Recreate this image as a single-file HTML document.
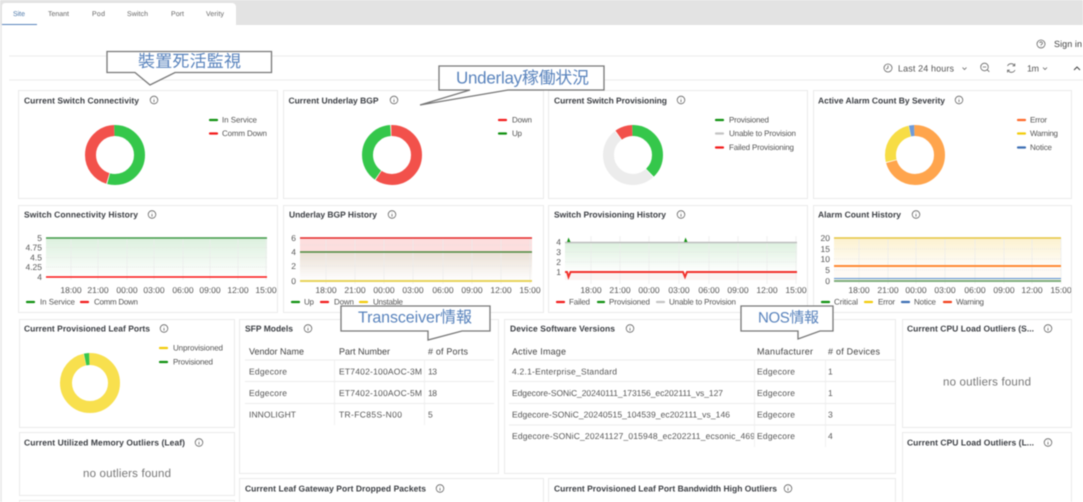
<!DOCTYPE html>
<html lang="zh-Hant"><head><meta charset="utf-8"><title>Dashboard</title>
<style>
html,body{margin:0;padding:0;width:1083px;height:502px;overflow:hidden;background:#fff}
svg{display:block;filter:blur(.4px)}
text{font-family:"Liberation Sans","Noto Sans CJK TC",sans-serif;font-size:8px;fill:#555;dominant-baseline:central;text-rendering:geometricPrecision}
.tab{font-size:7px;fill:#666}
.t{font-size:8.5px;font-weight:bold;fill:#3c3f44}
.c{fill:#fff;stroke:#ebebeb;stroke-width:1}
.th{font-size:9px;fill:#444}
.td{font-size:8.5px;fill:#555}
.ax{font-size:8.5px;fill:#555}
.no{font-size:11.5px;fill:#777}
.cj{font-size:17px;fill:#5a84bd}
.ic{fill:none;stroke:#666;stroke-width:.8}
.co{fill:#fff;stroke:#777;stroke-width:1.3}
.gv{stroke:#ebebeb;stroke-width:.7}
.gh{stroke:#ddd;stroke-width:.6;stroke-dasharray:1 1}
.rl{stroke:#ececec;stroke-width:1}
.l{stroke-width:2.2;stroke-linecap:round}
</style></head><body>
<svg width="1083" height="502" viewBox="0 0 1083 502" xmlns="http://www.w3.org/2000/svg">
<defs>
<linearGradient id="gg" x1="0" y1="0" x2="0" y2="1"><stop offset="0" stop-color="#dcf0de"/><stop offset="1" stop-color="#fff"/></linearGradient>
<linearGradient id="gb" x1="0" y1="0" x2="0" y2="1"><stop offset="0" stop-color="#eadfd4"/><stop offset="1" stop-color="#fff"/></linearGradient>
<linearGradient id="gy" x1="0" y1="0" x2="0" y2="1"><stop offset="0" stop-color="#fcf1cf"/><stop offset="1" stop-color="#fffdf8"/></linearGradient>
<clipPath id="cl1"><rect x="20" y="284" width="257" height="12"/></clipPath>
<clipPath id="cl2"><rect x="285" y="284" width="257" height="12"/></clipPath>
<clipPath id="cl3"><rect x="550" y="284" width="257" height="12"/></clipPath>
<clipPath id="cl4"><rect x="815" y="284" width="256" height="12"/></clipPath>
<clipPath id="cl5"><rect x="505" y="428" width="249" height="16"/></clipPath>
</defs>

<!-- top bar + tabs -->
<rect x="0" y="0" width="1083" height="25" fill="#e3e3e3"/>
<path d="M2 25V6a3 3 0 0 1 3-3H232a4 4 0 0 1 4 4V25z" fill="#fff"/>
<rect x="2" y="24" width="35" height="1" fill="#5a84bd"/>
<text x="13" y="14.500" class="tab" style="fill:#4a76a8" textLength="12">Site</text>
<text x="48" y="14.500" class="tab" textLength="21">Tenant</text>
<text x="92" y="14.500" class="tab" textLength="13">Pod</text>
<text x="127" y="14.500" class="tab" textLength="21">Switch</text>
<text x="171" y="14.500" class="tab" textLength="13">Port</text>
<text x="206" y="14.500" class="tab" textLength="18">Verity</text>
<rect x="0" y="25" width="2" height="477" fill="#ececec"/>
<line x1="9" y1="56" x2="1083" y2="56" class="rl"/>
<line x1="9" y1="80" x2="1083" y2="80" class="rl"/>

<!-- toolbar -->
<circle cx="1041" cy="44" r="4" class="ic"/><path d="M1039.800 43a1.300 1.300 0 1 1 1.800 1.300l-.6.500v.6M1041 46.300v.4" class="ic"/>
<text x="1054" y="44" style="font-size:9px;fill:#444" textLength="28">Sign in</text>
<circle cx="888" cy="68" r="4" class="ic"/><path d="M888 65.500V68l-1.800 1" class="ic"/>
<text x="898" y="68.500" style="font-size:9px" textLength="56">Last 24 hours</text>
<path d="M962.500 67.500l2 2 2-2" class="ic"/>
<circle cx="984.500" cy="67" r="3.800" class="ic"/><path d="M982.800 67h3.400M987.300 69.800l2 2" class="ic"/>
<path d="M1007.500 66a4 4 0 0 1 7-.5M1015 70a4 4 0 0 1-7 .5" class="ic"/><path d="M1014.800 63.500v2.300h-2.300M1007.500 72.500v-2.300h2.300" class="ic"/>
<text x="1027" y="68.500" style="font-size:9px" textLength="12">1m</text>
<path d="M1043 67.500l2 2 2-2" class="ic"/>
<path d="M1074 70l3-3 3 3" fill="none" stroke="#444" stroke-width="1"/>

<!-- row 1 cards -->
<rect x="18.500" y="90.500" width="259" height="108" class="c"/>
<rect x="283.500" y="90.500" width="260" height="108" class="c"/>
<rect x="548.500" y="90.500" width="259" height="108" class="c"/>
<rect x="813.500" y="90.500" width="258" height="108" class="c"/>
<text x="24" y="100.500" class="t" textLength="115">Current Switch Connectivity</text>
<text x="288.500" y="100.500" class="t" textLength="90">Current Underlay BGP</text>
<text x="554" y="100.500" class="t" textLength="113">Current Switch Provisioning</text>
<text x="818" y="100.500" class="t" textLength="127">Active Alarm Count By Severity</text>
<g class="ic"><circle cx="154" cy="100" r="3.800"/><path d="M154 98v.4M154 99.500v2.600"/>
<circle cx="394" cy="100" r="3.800"/><path d="M394 98v.4M394 99.500v2.600"/>
<circle cx="681" cy="100" r="3.800"/><path d="M681 98v.4M681 99.500v2.600"/>
<circle cx="959" cy="100" r="3.800"/><path d="M959 98v.4M959 99.500v2.600"/></g>

<!-- donuts -->
<g fill="none" stroke-width="11" transform="translate(115 155) rotate(-90)">
<circle r="24.500" pathLength="100" stroke="#35c74b" stroke-dasharray="54.500 45.500"/>
<circle r="24.500" pathLength="100" stroke="#f2514b" stroke-dasharray="45 55" stroke-dashoffset="-55"/></g>
<g fill="none" stroke-width="11" transform="translate(392 155) rotate(-90)">
<circle r="24.500" pathLength="100" stroke="#f2514b" stroke-dasharray="59.500 40.500"/>
<circle r="24.500" pathLength="100" stroke="#35c74b" stroke-dasharray="39.500 60.500" stroke-dashoffset="-60"/></g>
<g fill="none" stroke-width="11" transform="translate(633 155) rotate(-90)">
<circle r="24.500" pathLength="100" stroke="#35c74b" stroke-dasharray="38 62"/>
<circle r="24.500" pathLength="100" stroke="#ececec" stroke-dasharray="51.500 48.500" stroke-dashoffset="-38.500"/>
<circle r="24.500" pathLength="100" stroke="#f2514b" stroke-dasharray="9.500 90.500" stroke-dashoffset="-90.500"/></g>
<g fill="none" stroke-width="11" transform="translate(915 155) rotate(-90)">
<circle r="24.500" pathLength="100" stroke="#ffa54d" stroke-dasharray="71 29"/>
<circle r="24.500" pathLength="100" stroke="#f7dd45" stroke-dasharray="25.500 74.500" stroke-dashoffset="-71.500"/>
<circle r="24.500" pathLength="100" stroke="#6f9bd8" stroke-dasharray="2.800 97.200" stroke-dashoffset="-97.200"/></g>

<!-- donut legends -->
<line x1="210" y1="120" x2="217" y2="120" class="l" stroke="#119111"/><text x="222" y="120" textLength="35">In Service</text>
<line x1="210" y1="133.500" x2="217" y2="133.500" class="l" stroke="#f21c1c"/><text x="222" y="133.500" textLength="45">Comm Down</text>
<line x1="499" y1="120" x2="506" y2="120" class="l" stroke="#f21c1c"/><text x="512" y="120" textLength="20">Down</text>
<line x1="499" y1="133.500" x2="506" y2="133.500" class="l" stroke="#119111"/><text x="512" y="133.500" textLength="10">Up</text>
<line x1="716" y1="120" x2="723" y2="120" class="l" stroke="#119111"/><text x="729" y="120" textLength="40">Provisioned</text>
<line x1="716" y1="133.500" x2="723" y2="133.500" class="l" stroke="#c4c4c4"/><text x="729" y="133.500" textLength="67">Unable to Provision</text>
<line x1="716" y1="147.500" x2="723" y2="147.500" class="l" stroke="#f21c1c"/><text x="729" y="147.500" textLength="65">Failed Provisioning</text>
<line x1="1018" y1="120" x2="1025" y2="120" class="l" stroke="#ff6a2a"/><text x="1030" y="120" textLength="17">Error</text>
<line x1="1018" y1="133.500" x2="1025" y2="133.500" class="l" stroke="#f2cc0c"/><text x="1030" y="133.500" textLength="28">Warning</text>
<line x1="1018" y1="147.500" x2="1025" y2="147.500" class="l" stroke="#3d6fb4"/><text x="1030" y="147.500" textLength="22">Notice</text>
<!-- row 2 cards -->
<rect x="18.500" y="205.500" width="259" height="107" class="c"/>
<rect x="283.500" y="205.500" width="260" height="107" class="c"/>
<rect x="548.500" y="205.500" width="259" height="107" class="c"/>
<rect x="813.500" y="205.500" width="258" height="107" class="c"/>
<text x="24" y="214.500" class="t" textLength="114">Switch Connectivity History</text>
<text x="289" y="214.500" class="t" textLength="88">Underlay BGP History</text>
<text x="554" y="214.500" class="t" textLength="112">Switch Provisioning History</text>
<text x="818" y="214.500" class="t" textLength="83">Alarm Count History</text>
<g class="ic"><circle cx="152" cy="214.500" r="3.800"/><path d="M152 212.500v.4M152 214v2.600"/>
<circle cx="392" cy="214.500" r="3.800"/><path d="M392 212.500v.4M392 214v2.600"/>
<circle cx="681" cy="214.500" r="3.800"/><path d="M681 212.500v.4M681 214v2.600"/>
<circle cx="916" cy="214.500" r="3.800"/><path d="M916 212.500v.4M916 214v2.600"/></g>

<!-- chart 1 -->
<rect x="46" y="238" width="221" height="39" fill="url(#gg)"/>
<g class="gv"><path d="M71 238V280M98 238V280M127 238V280M154 238V280M183 238V280M210 238V280M238 238V280M266 238V280"/></g>
<g class="gh"><path d="M46 247.500H267M46 257.500H267M46 267H267"/></g>
<line x1="46" y1="238" x2="267" y2="238" stroke="#3f9a46" stroke-width="1.600"/>
<line x1="46" y1="277" x2="267" y2="277" stroke="#fa1414" stroke-width="1.600"/>
<text class="ax" x="42" y="238" text-anchor="end">5</text><text class="ax" x="42" y="247.500" text-anchor="end">4.75</text><text class="ax" x="42" y="257.500" text-anchor="end">4.5</text><text class="ax" x="42" y="267" text-anchor="end">4.25</text><text class="ax" x="42" y="277" text-anchor="end">4</text>
<g clip-path="url(#cl1)" text-anchor="middle"><text class="ax" x="71" y="290">18:00</text><text class="ax" x="98" y="290">21:00</text><text class="ax" x="127" y="290">00:00</text><text class="ax" x="154" y="290">03:00</text><text class="ax" x="183" y="290">06:00</text><text class="ax" x="210" y="290">09:00</text><text class="ax" x="238" y="290">12:00</text><text class="ax" x="266" y="290">15:00</text></g>
<line x1="27" y1="302" x2="34" y2="302" class="l" stroke="#119111"/><text x="40" y="302" textLength="35">In Service</text>
<line x1="81" y1="302" x2="88" y2="302" class="l" stroke="#f21c1c"/><text x="94" y="302" textLength="44">Comm Down</text>

<!-- chart 2 -->
<rect x="300" y="238" width="232" height="14" fill="#fddede"/>
<rect x="300" y="252" width="232" height="29" fill="url(#gb)"/>
<g class="gv"><path d="M326 238V284M355 238V284M384 238V284M413 238V284M443 238V284M472 238V284M501 238V284M530 238V284"/></g>
<g class="gh"><path d="M300 245H532M300 259H532M300 266H532"/></g>
<line x1="300" y1="238" x2="532" y2="238" stroke="#e32727" stroke-width="1.600"/>
<line x1="300" y1="252" x2="532" y2="252" stroke="#4c8a3e" stroke-width="1.400"/>
<line x1="300" y1="281" x2="532" y2="281" stroke="#e8d35a" stroke-width="2"/>
<text class="ax" x="296" y="238" text-anchor="end">6</text><text class="ax" x="296" y="252" text-anchor="end">4</text><text class="ax" x="296" y="266" text-anchor="end">2</text><text class="ax" x="296" y="281" text-anchor="end">0</text>
<g clip-path="url(#cl2)" text-anchor="middle"><text class="ax" x="326" y="290">18:00</text><text class="ax" x="355" y="290">21:00</text><text class="ax" x="384" y="290">00:00</text><text class="ax" x="413" y="290">03:00</text><text class="ax" x="443" y="290">06:00</text><text class="ax" x="472" y="290">09:00</text><text class="ax" x="501" y="290">12:00</text><text class="ax" x="530" y="290">15:00</text></g>
<line x1="292" y1="302" x2="299" y2="302" class="l" stroke="#119111"/><text x="304" y="302" textLength="10">Up</text>
<line x1="321" y1="302" x2="328" y2="302" class="l" stroke="#f21c1c"/><text x="334" y="302" textLength="20">Down</text>
<line x1="360" y1="302" x2="367" y2="302" class="l" stroke="#f2cc0c"/><text x="373" y="302" textLength="30">Unstable</text>

<!-- chart 3 -->
<rect x="565" y="242" width="232" height="30" fill="url(#gg)"/>
<rect x="565" y="272" width="232" height="8" fill="#fbf3f2"/>
<g class="gv"><path d="M591 236V284M620 236V284M649 236V284M679 236V284M709 236V284M738 236V284M767 236V284M796 236V284"/></g>
<g class="gh"><path d="M565 252H797M565 262H797"/></g>
<line x1="565" y1="242.500" x2="797" y2="242.500" stroke="#bdbdbd" stroke-width="1.400"/>
<path d="M567 242L568.500 237.500 570.500 242zM684 242L685.500 237.500 687.500 242z" fill="#119111"/>
<path d="M565 272H567L568.500 277 570.500 272H683L685 277 687 272H797" fill="none" stroke="#f2302b" stroke-width="1.900"/>
<text class="ax" x="561" y="242" text-anchor="end">4</text><text class="ax" x="561" y="252" text-anchor="end">3</text><text class="ax" x="561" y="262" text-anchor="end">2</text><text class="ax" x="561" y="272" text-anchor="end">1</text>
<g clip-path="url(#cl3)" text-anchor="middle"><text class="ax" x="591" y="290">18:00</text><text class="ax" x="620" y="290">21:00</text><text class="ax" x="649" y="290">00:00</text><text class="ax" x="679" y="290">03:00</text><text class="ax" x="709" y="290">06:00</text><text class="ax" x="738" y="290">09:00</text><text class="ax" x="767" y="290">12:00</text><text class="ax" x="796" y="290">15:00</text></g>
<line x1="557" y1="302" x2="564" y2="302" class="l" stroke="#f21c1c"/><text x="569" y="302" textLength="21">Failed</text>
<line x1="598" y1="302" x2="604" y2="302" class="l" stroke="#119111"/><text x="609" y="302" textLength="41">Provisioned</text>
<line x1="657" y1="302" x2="664" y2="302" class="l" stroke="#c4c4c4"/><text x="669" y="302" textLength="67">Unable to Provision</text>

<!-- chart 4 -->
<rect x="834" y="238" width="227" height="28" fill="url(#gy)"/>
<rect x="834" y="266" width="227" height="15" fill="#fffaf5"/>
<g class="gv"><path d="M859 238V284M888 238V284M916 238V284M945 238V284M975 238V284M1004 238V284M1032 238V284M1061 238V284"/></g>
<g class="gh"><path d="M834 249H1061M834 259H1061M834 270H1061"/></g>
<line x1="834" y1="238" x2="1061" y2="238" stroke="#e5c640" stroke-width="1.600"/>
<line x1="834" y1="266" x2="1061" y2="266" stroke="#ff8a33" stroke-width="2"/>
<line x1="834" y1="278.500" x2="1061" y2="278.500" stroke="#5a8fd0" stroke-width="1.100"/>
<line x1="834" y1="281" x2="1061" y2="281" stroke="#7fae7c" stroke-width="2"/>
<text class="ax" x="830" y="238" text-anchor="end">20</text><text class="ax" x="830" y="249" text-anchor="end">15</text><text class="ax" x="830" y="259" text-anchor="end">10</text><text class="ax" x="830" y="270" text-anchor="end">5</text><text class="ax" x="830" y="281" text-anchor="end">0</text>
<g clip-path="url(#cl4)" text-anchor="middle"><text class="ax" x="859" y="290">18:00</text><text class="ax" x="888" y="290">21:00</text><text class="ax" x="916" y="290">00:00</text><text class="ax" x="945" y="290">03:00</text><text class="ax" x="975" y="290">06:00</text><text class="ax" x="1004" y="290">09:00</text><text class="ax" x="1032" y="290">12:00</text><text class="ax" x="1061" y="290">15:00</text></g>
<line x1="822" y1="302" x2="829" y2="302" class="l" stroke="#119111"/><text x="834" y="302" textLength="24">Critical</text>
<line x1="865" y1="302" x2="872" y2="302" class="l" stroke="#f2cc0c"/><text x="878" y="302" textLength="17">Error</text>
<line x1="902" y1="302" x2="909" y2="302" class="l" stroke="#3d6fb4"/><text x="914" y="302" textLength="22">Notice</text>
<line x1="944" y1="302" x2="951" y2="302" class="l" stroke="#f2401c"/><text x="956" y="302" textLength="28">Warning</text>

<!-- row 3 cards -->
<rect x="19.500" y="319.500" width="215" height="108" class="c"/>
<rect x="19.500" y="432.500" width="215" height="63" class="c"/>
<rect x="19.500" y="500.500" width="215" height="10" class="c"/>
<rect x="239.500" y="319.500" width="259" height="154" class="c"/>
<rect x="504.500" y="319.500" width="391" height="154" class="c"/>
<rect x="902.500" y="319.500" width="169" height="108" class="c"/>
<rect x="902.500" y="432.500" width="169" height="80" class="c"/>
<rect x="239.500" y="478.500" width="304" height="40" class="c"/>
<rect x="548.500" y="478.500" width="347" height="40" class="c"/>
<text x="24" y="328.500" class="t" textLength="126">Current Provisioned Leaf Ports</text>
<text x="245" y="328.500" class="t" textLength="48">SFP Models</text>
<text x="510" y="328.500" class="t" textLength="105">Device Software Versions</text>
<text x="907" y="328.500" class="t" textLength="127">Current CPU Load Outliers (S...</text>
<text x="24" y="442.500" class="t" textLength="161">Current Utilized Memory Outliers (Leaf)</text>
<text x="907" y="442.500" class="t" textLength="127">Current CPU Load Outliers (L...</text>
<text x="245" y="488.500" class="t" textLength="181">Current Leaf Gateway Port Dropped Packets</text>
<text x="554" y="488.500" class="t" textLength="223">Current Provisioned Leaf Port Bandwidth High Outliers</text>
<g class="ic"><circle cx="164" cy="328.500" r="3.800"/><path d="M164 326.500v.4M164 328v2.600"/>
<circle cx="308" cy="328.500" r="3.800"/><path d="M308 326.500v.4M308 328v2.600"/>
<circle cx="630" cy="328.500" r="3.800"/><path d="M630 326.500v.4M630 328v2.600"/>
<circle cx="1048" cy="328.500" r="3.800"/><path d="M1048 326.500v.4M1048 328v2.600"/>
<circle cx="199" cy="442.500" r="3.800"/><path d="M199 440.500v.4M199 442v2.600"/>
<circle cx="1048" cy="442.500" r="3.800"/><path d="M1048 440.500v.4M1048 442v2.600"/>
<circle cx="440" cy="488.500" r="3.800"/><path d="M440 486.500v.4M440 488v2.600"/>
<circle cx="788" cy="488.500" r="3.800"/><path d="M788 486.500v.4M788 488v2.600"/></g>

<!-- leaf ports donut -->
<g fill="none" stroke-width="12" transform="translate(90 383) rotate(-90)">
<circle r="24" pathLength="100" stroke="#f8e04e" stroke-dasharray="97 3"/>
<circle r="24" pathLength="100" stroke="#35c74b" stroke-dasharray="2.800 97.200" stroke-dashoffset="-97.200"/></g>
<line x1="160" y1="348" x2="167" y2="348" class="l" stroke="#f2cc0c"/><text x="173" y="348" textLength="50">Unprovisioned</text>
<line x1="160" y1="362" x2="167" y2="362" class="l" stroke="#119111"/><text x="173" y="362" textLength="40">Provisioned</text>
<text x="83" y="474" class="no" textLength="88">no outliers found</text>
<text x="943" y="382.500" class="no" textLength="88">no outliers found</text>

<!-- SFP table -->
<g class="rl"><path d="M245 360H494M245 381.500H494M245 403.500H494"/></g>
<g class="gv"><path d="M334.500 360V425M424.500 360V425M754.500 360V447M825.500 360V447"/></g>
<text x="249" y="351.500" class="th" textLength="55">Vendor Name</text><text x="339" y="351.500" class="th" textLength="51">Part Number</text><text x="428" y="351.500" class="th" textLength="40"># of Ports</text>
<text x="249" y="371.500" class="td" textLength="38">Edgecore</text><text x="339" y="371.500" class="td" textLength="83">ET7402-100AOC-3M</text><text x="428" y="371.500" class="td" textLength="9">13</text>
<text x="249" y="393" class="td" textLength="38">Edgecore</text><text x="339" y="393" class="td" textLength="83">ET7402-100AOC-5M</text><text x="428" y="393" class="td" textLength="9">18</text>
<text x="249" y="414.500" class="td" textLength="47">INNOLIGHT</text><text x="339" y="414.500" class="td" textLength="63">TR-FC85S-N00</text><text x="428" y="414.500" class="td">5</text>

<!-- Device table -->
<g class="rl"><path d="M509 360H896M509 381.500H896M509 403.500H896M509 425H896"/></g>
<text x="512" y="351.500" class="th" textLength="54">Active Image</text><text x="757" y="351.500" class="th" textLength="56">Manufacturer</text><text x="828" y="351.500" class="th" textLength="52"># of Devices</text>
<text x="512" y="371.500" class="td" textLength="105">4.2.1-Enterprise_Standard</text><text x="757" y="371.500" class="td" textLength="38">Edgecore</text><text x="828" y="371.500" class="td">1</text>
<text x="512" y="393" class="td" textLength="211">Edgecore-SONiC_20240111_173156_ec202111_vs_127</text><text x="757" y="393" class="td" textLength="38">Edgecore</text><text x="828" y="393" class="td">1</text>
<text x="512" y="414.500" class="td" textLength="218">Edgecore-SONiC_20240515_104539_ec202111_vs_146</text><text x="757" y="414.500" class="td" textLength="38">Edgecore</text><text x="828" y="414.500" class="td">3</text>
<g clip-path="url(#cl5)"><text x="512" y="436" class="td" textLength="243">Edgecore-SONiC_20241127_015948_ec202211_ecsonic_469</text></g><text x="757" y="436" class="td" textLength="38">Edgecore</text><text x="828" y="436" class="td">4</text>

<!-- callouts -->
<path class="co" d="M107 51.500H271.500V72.500H175L150 85 135 72.500H107Z"/>
<text x="138" y="61.500" class="cj" textLength="103">裝置死活監視</text>
<path class="co" d="M439 66H604V90H508L420 105 470 90H439Z"/>
<text x="456" y="78" class="cj" textLength="133">Underlay稼働状況</text>
<path class="co" d="M341 306H490V331H462L428 340V331H341Z"/>
<text x="358" y="318" class="cj" style="font-size:16px" textLength="114">Transceiver情報</text>
<path class="co" d="M741 306H833V331H820L798 339V331H741Z"/>
<text x="758" y="318" class="cj" style="font-size:15px" textLength="61">NOS情報</text>
</svg>
</body></html>
